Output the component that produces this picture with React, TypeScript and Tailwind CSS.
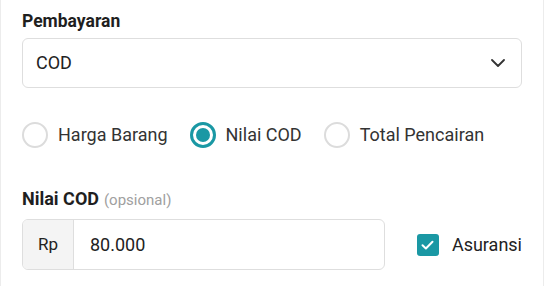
import React from "react";

function Radio({ checked, label }: { checked?: boolean; label: string }) {
  return (
    <div className="flex items-center gap-[10px]">
      {checked ? (
        <span className="flex h-[26px] w-[26px] items-center justify-center rounded-full border-[3px] border-[#1a98a4] bg-white">
          <span className="h-[14px] w-[14px] rounded-full bg-[#1a98a4]" />
        </span>
      ) : (
        <span className="h-[26px] w-[26px] rounded-full border-[2px] border-[#dcdcdc] bg-white" />
      )}
      <span className="text-[18px] leading-[24px] text-[#333]">{label}</span>
    </div>
  );
}

export default function App() {
  return (
    <div
      className="flex h-[286px] w-[544px] flex-col border-x border-[#ececec] bg-white px-[21px] text-[#222]"
      style={{ fontFamily: 'Roboto, "Noto Sans", sans-serif' }}
    >
      <div className="pt-[9px] text-[17.5px] font-bold leading-[24px] text-[#1f1f1f]">Pembayaran</div>
      <div className="mt-[5px] flex h-[50px] w-[500px] items-center justify-between rounded-[6px] border border-[#dedede] pl-[13px] pr-[16px]">
        <span className="text-[18px] leading-[24px] text-[#222]">COD</span>
        <svg width="14" height="8" viewBox="0 0 14 8" fill="none">
          <path d="M1 1l6 6 6-6" stroke="#333" strokeWidth="1.8" strokeLinecap="round" strokeLinejoin="round" />
        </svg>
      </div>
      <div className="mt-[34px] flex items-center gap-[22px]">
        <Radio label="Harga Barang" />
        <Radio checked label="Nilai COD" />
        <Radio label="Total Pencairan" />
      </div>
      <div className="mt-[39px] flex items-baseline gap-[5px]">
        <span className="text-[18px] font-bold leading-[24px] text-[#1f1f1f]">Nilai COD</span>
        <span className="text-[15px] leading-[24px] text-[#a0a0a0]">(opsional)</span>
      </div>
      <div className="mt-[7px] flex items-center">
        <div className="flex h-[51px] w-[364px] overflow-hidden rounded-[6px] border border-[#dedede]">
          <div className="flex w-[51px] items-center justify-center border-r border-[#dedede] bg-[#f4f4f4] text-[17px] text-[#222]">
            Rp
          </div>
          <div className="flex flex-1 items-center pl-[16px] text-[18px] text-[#222]">80.000</div>
        </div>
        <div className="ml-[32px] flex items-center gap-[13px]">
          <span className="flex h-[22px] w-[22px] items-center justify-center rounded-[3px] bg-[#1a98a4]">
            <svg width="13" height="10" viewBox="0 0 13 10" fill="none">
              <path d="M1.5 5.2l3.4 3.3L11.5 1.8" stroke="#fff" strokeWidth="2" strokeLinecap="round" strokeLinejoin="round" />
            </svg>
          </span>
          <span className="text-[18px] leading-[24px] text-[#222]">Asuransi</span>
        </div>
      </div>
    </div>
  );
}
